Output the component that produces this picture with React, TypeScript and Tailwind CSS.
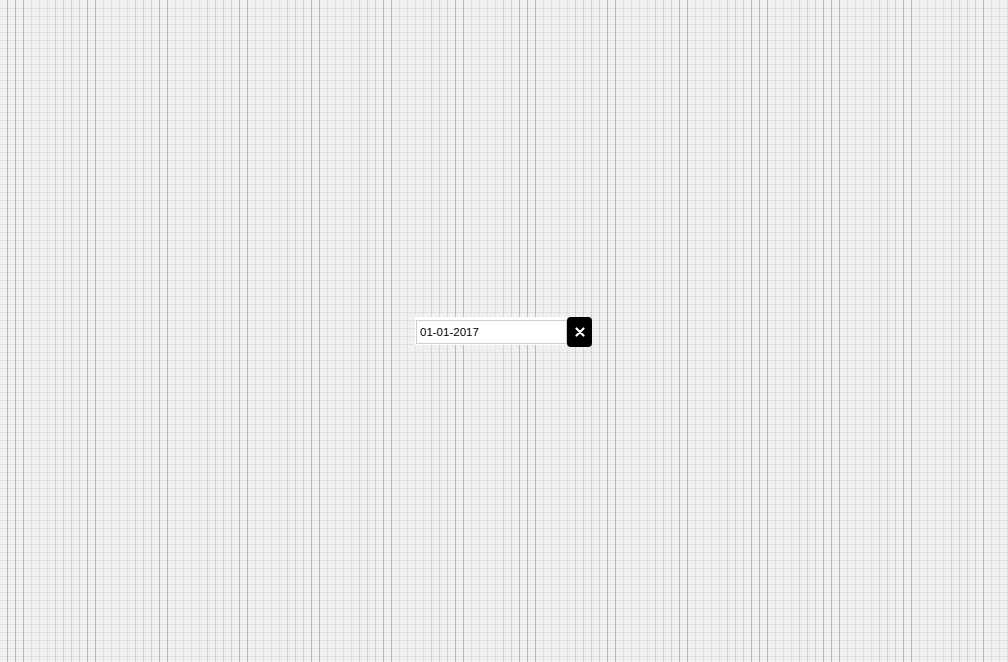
import React from 'react';

// vertical grid line shades, one letter per 8px column (x = 7 + 8i)
const COLUMN_SHADES =
  'DDDLLLMMMMDDLLLLMMMDDLLLLMMMMDDLLLLMMMDDLLLLMMMDDLLLLMMMDDLLLLMMDDDLLLLMMMMDDLLLLMMMDDLLLLMMMDDDLLLMMMDDDLLLLMMMDDLLLLMMMMDLLLL';

const SHADE_ALPHA: Record<string, number> = {
  L: 0.055,
  M: 0.12,
  D: 0.23,
};

function GridBackdrop() {
  const cols = Array.from({ length: 126 }, (_, i) => ({
    x: 7 + i * 8,
    a: SHADE_ALPHA[COLUMN_SHADES[i] ?? 'L'],
  }));
  const rows = Array.from({ length: 83 }, (_, j) => 8 + j * 8);

  return (
    <svg
      className="pointer-events-none absolute inset-0 h-full w-full"
      xmlns="http://www.w3.org/2000/svg"
      shapeRendering="crispEdges"
    >
      {rows.map((y) => (
        <rect key={`r${y}`} x={0} y={y} width="100%" height={1} fill="rgba(0,0,0,0.07)" />
      ))}
      {cols.map((c) => (
        <rect key={`c${c.x}`} x={c.x} y={0} width={1} height="100%" fill={`rgba(0,0,0,${c.a})`} />
      ))}
    </svg>
  );
}

function ClearIcon() {
  return (
    <svg width="10" height="10" viewBox="0 0 10 10" fill="none">
      <path d="M1.5 1.5L8.5 8.5M8.5 1.5L1.5 8.5" stroke="white" strokeWidth="2.2" strokeLinecap="round" />
    </svg>
  );
}

export default function App() {
  return (
    <div className="relative flex h-screen w-full items-center justify-center overflow-hidden bg-[#f1f1f1] font-['Liberation_Sans',Arial,sans-serif]">
      <GridBackdrop />
      <div className="relative mr-[1px] mt-[2px] flex items-start">
        <div className="h-[28px] w-[152px] bg-white py-[2px] pl-[1px]">
          <input
            type="text"
            readOnly
            value="01-01-2017"
            className="h-full w-full border border-[#cfcfcf] bg-white px-[3px] text-[11.5px] text-black outline-none"
          />
        </div>
        <button
          type="button"
          className="flex h-[30px] w-[25px] items-center justify-center rounded-[4px] bg-black"
        >
          <ClearIcon />
        </button>
      </div>
    </div>
  );
}
